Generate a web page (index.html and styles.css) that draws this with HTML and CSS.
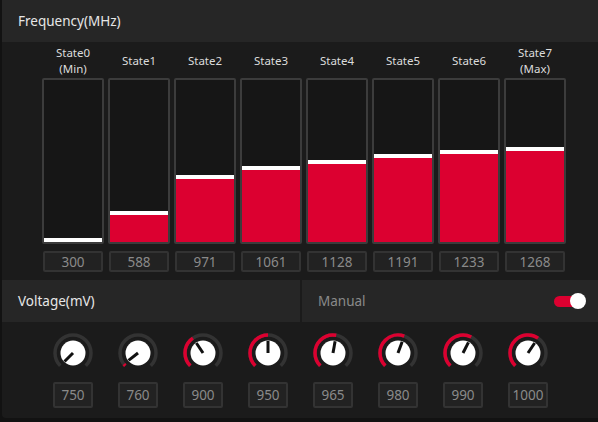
FILE: index.html
```html
<!DOCTYPE html>
<html>
<head>
<meta charset="utf-8">
<link rel="stylesheet" href="styles.css">
</head>
<body>
<div class="panel">
  <div class="hdr"><span class="title">Frequency(MHz)</span></div>
  <div class="freq">
    <div class="col"><div class="lbl">State0<br>(Min)</div><div class="bar"><div class="fill" style="height:4px"></div></div><div class="val">300</div></div>
    <div class="col"><div class="lbl">State1</div><div class="bar"><div class="fill" style="height:31px"></div></div><div class="val">588</div></div>
    <div class="col"><div class="lbl">State2</div><div class="bar"><div class="fill" style="height:67px"></div></div><div class="val">971</div></div>
    <div class="col"><div class="lbl">State3</div><div class="bar"><div class="fill" style="height:76px"></div></div><div class="val">1061</div></div>
    <div class="col"><div class="lbl">State4</div><div class="bar"><div class="fill" style="height:82px"></div></div><div class="val">1128</div></div>
    <div class="col"><div class="lbl">State5</div><div class="bar"><div class="fill" style="height:88px"></div></div><div class="val">1191</div></div>
    <div class="col"><div class="lbl">State6</div><div class="bar"><div class="fill" style="height:92px"></div></div><div class="val">1233</div></div>
    <div class="col"><div class="lbl">State7<br>(Max)</div><div class="bar"><div class="fill" style="height:95px"></div></div><div class="val">1268</div></div>
  </div>
  <div class="vrow">
    <div class="hdr half"><span class="title">Voltage(mV)</span></div>
    <div class="hdr half manual"><span class="mtitle">Manual</span><span class="toggle"><span class="knobdot"></span></span></div>
  </div>
  <div class="volt">
    <div class="kcol">
      <svg class="knob" viewBox="0 0 44 44" width="44" height="44"><path class="track" d="M9.27 34.73 A18 18 0 1 1 34.73 34.73"/><path class="arc" pathLength="100" stroke-dasharray="0 100" d="M9.27 34.73 A18 18 0 1 1 34.73 34.73"/><circle class="face" cx="22" cy="22" r="12.5"/><line class="ptr" x1="22" y1="22" x2="13.51" y2="30.49"/></svg>
      <div class="kval">750</div>
    </div>
    <div class="kcol">
      <svg class="knob" viewBox="0 0 44 44" width="44" height="44"><path class="track" d="M9.27 34.73 A18 18 0 1 1 34.73 34.73"/><path class="arc" pathLength="100" stroke-dasharray="2.5 100" d="M9.27 34.73 A18 18 0 1 1 34.73 34.73"/><circle class="face" cx="22" cy="22" r="12.5"/><line class="ptr" x1="22" y1="22" x2="12.58" y2="29.43"/></svg>
      <div class="kval">760</div>
    </div>
    <div class="kcol">
      <svg class="knob" viewBox="0 0 44 44" width="44" height="44"><path class="track" d="M9.27 34.73 A18 18 0 1 1 34.73 34.73"/><path class="arc" pathLength="100" stroke-dasharray="37.5 100" d="M9.27 34.73 A18 18 0 1 1 34.73 34.73"/><circle class="face" cx="22" cy="22" r="12.5"/><line class="ptr" x1="22" y1="22" x2="15.33" y2="12.02"/></svg>
      <div class="kval">900</div>
    </div>
    <div class="kcol">
      <svg class="knob" viewBox="0 0 44 44" width="44" height="44"><path class="track" d="M9.27 34.73 A18 18 0 1 1 34.73 34.73"/><path class="arc" pathLength="100" stroke-dasharray="50 100" d="M9.27 34.73 A18 18 0 1 1 34.73 34.73"/><circle class="face" cx="22" cy="22" r="12.5"/><line class="ptr" x1="22" y1="22" x2="22" y2="10"/></svg>
      <div class="kval">950</div>
    </div>
    <div class="kcol">
      <svg class="knob" viewBox="0 0 44 44" width="44" height="44"><path class="track" d="M9.27 34.73 A18 18 0 1 1 34.73 34.73"/><path class="arc" pathLength="100" stroke-dasharray="53.75 100" d="M9.27 34.73 A18 18 0 1 1 34.73 34.73"/><circle class="face" cx="22" cy="22" r="12.5"/><line class="ptr" x1="22" y1="22" x2="24.11" y2="10.19"/></svg>
      <div class="kval">965</div>
    </div>
    <div class="kcol">
      <svg class="knob" viewBox="0 0 44 44" width="44" height="44"><path class="track" d="M9.27 34.73 A18 18 0 1 1 34.73 34.73"/><path class="arc" pathLength="100" stroke-dasharray="57.5 100" d="M9.27 34.73 A18 18 0 1 1 34.73 34.73"/><circle class="face" cx="22" cy="22" r="12.5"/><line class="ptr" x1="22" y1="22" x2="26.15" y2="10.74"/></svg>
      <div class="kval">980</div>
    </div>
    <div class="kcol">
      <svg class="knob" viewBox="0 0 44 44" width="44" height="44"><path class="track" d="M9.27 34.73 A18 18 0 1 1 34.73 34.73"/><path class="arc" pathLength="100" stroke-dasharray="60 100" d="M9.27 34.73 A18 18 0 1 1 34.73 34.73"/><circle class="face" cx="22" cy="22" r="12.5"/><line class="ptr" x1="22" y1="22" x2="27.45" y2="11.31"/></svg>
      <div class="kval">990</div>
    </div>
    <div class="kcol">
      <svg class="knob" viewBox="0 0 44 44" width="44" height="44"><path class="track" d="M9.27 34.73 A18 18 0 1 1 34.73 34.73"/><path class="arc" pathLength="100" stroke-dasharray="62.5 100" d="M9.27 34.73 A18 18 0 1 1 34.73 34.73"/><circle class="face" cx="22" cy="22" r="12.5"/><line class="ptr" x1="22" y1="22" x2="28.67" y2="12.02"/></svg>
      <div class="kval">1000</div>
    </div>
  </div>
</div>
</body>
</html>
```

FILE: styles.css
```css
html, body {
  margin: 0;
  padding: 0;
  background: #121212;
  width: 598px;
  height: 422px;
  overflow: hidden;
}
body {
  font-family: "Noto Sans", "Open Sans", sans-serif;
}
.panel {
  margin-left: 2px;
  width: 600px;
  height: 418px;
  background: #1b1b1b;
  border-radius: 0 0 4px 4px;
  display: flex;
  flex-direction: column;
}
.hdr {
  height: 42px;
  background: #262626;
  display: flex;
  align-items: center;
  padding-left: 16px;
  box-sizing: border-box;
}
.title {
  color: #e6e6e6;
  font-size: 13.5px;
}
.freq {
  display: flex;
  gap: 4px;
  padding: 2px 0 8px 40px;
  height: 238px;
  box-sizing: border-box;
}
.col {
  width: 62px;
  display: flex;
  flex-direction: column;
  align-items: center;
}
.lbl {
  height: 34px;
  display: flex;
  align-items: center;
  justify-content: center;
  text-align: center;
  color: #dcdcdc;
  font-size: 11.5px;
  line-height: 16px;
}
.bar {
  width: 62px;
  height: 166px;
  box-sizing: border-box;
  border: 2px solid #3c3c3c;
  border-radius: 2px;
  background: #161616;
  display: flex;
  flex-direction: column;
  justify-content: flex-end;
}
.fill {
  background: #dc0030;
  border-top: 4px solid #ffffff;
  box-sizing: border-box;
}
.val {
  margin-top: 7px;
  width: 60px;
  height: 21px;
  box-sizing: border-box;
  border: 2px solid #333333;
  border-radius: 2px;
  background: #222222;
  color: #8a8a8a;
  font-size: 13.5px;
  display: flex;
  align-items: center;
  justify-content: center;
}
.vrow {
  display: flex;
  gap: 2px;
  background: #1b1b1b;
}
.half {
  width: 298px;
}
.manual {
  flex: 1;
  justify-content: space-between;
  padding-right: 18px;
}
.mtitle {
  color: #8a8a8a;
  font-size: 13.5px;
}
.toggle {
  width: 30px;
  height: 11px;
  border-radius: 6px;
  background: #dc0030;
  position: relative;
}
.knobdot {
  position: absolute;
  right: -2px;
  top: -3px;
  width: 16px;
  height: 16px;
  border-radius: 50%;
  background: #ffffff;
}
.volt {
  display: flex;
  gap: 19px;
  padding: 9px 0 0 48px;
}
.kcol {
  width: 46px;
  display: flex;
  flex-direction: column;
  align-items: center;
}
.knob {
  display: block;
}
.track {
  fill: none;
  stroke: #333333;
  stroke-width: 3.5;
}
.arc {
  fill: none;
  stroke: #dc0030;
  stroke-width: 3.5;
}
.face {
  fill: #ffffff;
}
.ptr {
  stroke: #111111;
  stroke-width: 3;
}
.kval {
  margin-top: 7px;
  width: 40px;
  height: 26px;
  box-sizing: border-box;
  border: 2px solid #333333;
  border-radius: 2px;
  background: #222222;
  color: #8a8a8a;
  font-size: 13.5px;
  display: flex;
  align-items: center;
  justify-content: center;
}
```
